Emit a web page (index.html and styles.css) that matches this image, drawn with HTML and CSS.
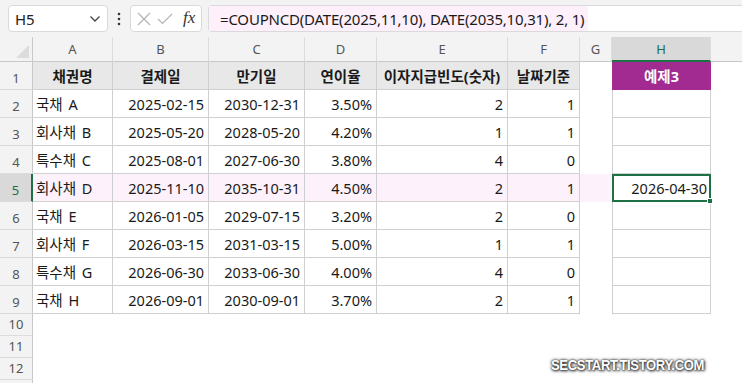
FILE: index.html
```html
<!DOCTYPE html>
<html lang="ko">
<head>
    <meta charset="UTF-8">
    <meta name="viewport" content="width=device-width, initial-scale=1.0">
    <title>COUPNCD 예제</title>
    <link rel="stylesheet" href="styles.css">
</head>
<body>
    <div class="app">
        <!-- formula bar -->
        <div class="toolbar">
            <div class="namebox">
                <span>H5</span>
                <svg width="12" height="8" viewBox="0 0 12 8"><path d="M1.5 1.5l4.5 4.5 4.5-4.5" fill="none" stroke="#444" stroke-width="1.3"/></svg>
            </div>
            <div class="dots">
                <svg width="4" height="14" viewBox="0 0 4 14"><circle cx="2" cy="2" r="1.3" fill="#333"/><circle cx="2" cy="7" r="1.3" fill="#333"/><circle cx="2" cy="12" r="1.3" fill="#333"/></svg>
            </div>
            <div class="fxbox">
                <svg width="14" height="14" viewBox="0 0 14 14"><path d="M1 1l12 12M13 1L1 13" stroke="#b4b4b4" stroke-width="1.2"/></svg>
                <svg width="16" height="12" viewBox="0 0 16 12"><path d="M1 6l4.5 4.5L15 1" fill="none" stroke="#b4b4b4" stroke-width="1.2"/></svg>
                <span class="fx">fx</span>
            </div>
            <div class="formula">
                <span class="formula-text">=COUPNCD(DATE(2025,11,10), DATE(2035,10,31), 2, 1)</span>
            </div>
        </div>

        <!-- worksheet -->
        <div class="sheet">
            <div class="corner"><span class="tri"></span></div>
            <div class="ch">A</div>
            <div class="ch">B</div>
            <div class="ch">C</div>
            <div class="ch">D</div>
            <div class="ch">E</div>
            <div class="ch">F</div>
            <div class="ch">G</div>
            <div class="ch sel">H</div>
            <div class="ch rest"></div>

            <div class="rh">1</div>
            <div class="c t hd">채권명</div>
            <div class="c t hd">결제일</div>
            <div class="c t hd">만기일</div>
            <div class="c t hd">연이율</div>
            <div class="c t hd">이자지급빈도(숫자)</div>
            <div class="c t hd">날짜기준</div>
            <div class="c"></div>
            <div class="c t hl purple">예제3</div>
            <div class="c"></div>

            <div class="rh">2</div>
            <div class="c t txt">국채 A</div>
            <div class="c t num">2025-02-15</div>
            <div class="c t num">2030-12-31</div>
            <div class="c t num">3.50%</div>
            <div class="c t num">2</div>
            <div class="c t num">1</div>
            <div class="c"></div>
            <div class="c t hl"></div>
            <div class="c"></div>

            <div class="rh">3</div>
            <div class="c t txt">회사채 B</div>
            <div class="c t num">2025-05-20</div>
            <div class="c t num">2028-05-20</div>
            <div class="c t num">4.20%</div>
            <div class="c t num">1</div>
            <div class="c t num">1</div>
            <div class="c"></div>
            <div class="c t hl"></div>
            <div class="c"></div>

            <div class="rh">4</div>
            <div class="c t txt">특수채 C</div>
            <div class="c t num">2025-08-01</div>
            <div class="c t num">2027-06-30</div>
            <div class="c t num">3.80%</div>
            <div class="c t num">4</div>
            <div class="c t num">0</div>
            <div class="c"></div>
            <div class="c t hl"></div>
            <div class="c"></div>

            <div class="rh sel">5</div>
            <div class="c t txt pink">회사채 D</div>
            <div class="c t num pink">2025-11-10</div>
            <div class="c t num pink">2035-10-31</div>
            <div class="c t num pink">4.50%</div>
            <div class="c t num pink">2</div>
            <div class="c t num pink">1</div>
            <div class="c pink"></div>
            <div class="c t hl num active">2026-04-30<span class="handle"></span></div>
            <div class="c"></div>

            <div class="rh">6</div>
            <div class="c t txt">국채 E</div>
            <div class="c t num">2026-01-05</div>
            <div class="c t num">2029-07-15</div>
            <div class="c t num">3.20%</div>
            <div class="c t num">2</div>
            <div class="c t num">0</div>
            <div class="c"></div>
            <div class="c t hl"></div>
            <div class="c"></div>

            <div class="rh">7</div>
            <div class="c t txt">회사채 F</div>
            <div class="c t num">2026-03-15</div>
            <div class="c t num">2031-03-15</div>
            <div class="c t num">5.00%</div>
            <div class="c t num">1</div>
            <div class="c t num">1</div>
            <div class="c"></div>
            <div class="c t hl"></div>
            <div class="c"></div>

            <div class="rh">8</div>
            <div class="c t txt">특수채 G</div>
            <div class="c t num">2026-06-30</div>
            <div class="c t num">2033-06-30</div>
            <div class="c t num">4.00%</div>
            <div class="c t num">4</div>
            <div class="c t num">0</div>
            <div class="c"></div>
            <div class="c t hl"></div>
            <div class="c"></div>

            <div class="rh">9</div>
            <div class="c t txt">국채 H</div>
            <div class="c t num">2026-09-01</div>
            <div class="c t num">2030-09-01</div>
            <div class="c t num">3.70%</div>
            <div class="c t num">2</div>
            <div class="c t num">1</div>
            <div class="c"></div>
            <div class="c t hl"></div>
            <div class="c"></div>

            <div class="rh">10</div>
            <div class="blank"></div>
            <div class="rh">11</div>
            <div class="blank"></div>
            <div class="rh">12</div>
            <div class="blank"></div>
            <div class="rh last"></div>
            <div class="blank"></div>
        </div>

        <div class="watermark">SECSTART.TISTORY.COM</div>
    </div>
</body>
</html>
```

FILE: styles.css
```css
*{
   margin: 0;
   padding: 0;
   box-sizing: border-box;
}
body{
   font-family: "Noto Sans", "Noto Sans CJK KR", sans-serif;
   background-color: #fff;
   color: #1a1a1a;
}
.app{
   position: relative;
   width: 742px;
   height: 383px;
   overflow: hidden;
}

/* formula bar */
.toolbar{
   height: 37px;
   background-color: #f3f3f3;
   display: flex;
   align-items: flex-start;
   padding: 5px 0 0 8px;
}
.namebox{
   width: 100px;
   height: 27px;
   background-color: #fff;
   border: 1px solid #dadada;
   border-radius: 4px;
   display: flex;
   align-items: center;
   justify-content: space-between;
   padding: 0 6px 0 6px;
   font-size: 15px;
   color: #222;
}
.dots{
   width: 22px;
   height: 27px;
   display: flex;
   align-items: center;
   justify-content: center;
}
.fxbox{
   width: 72px;
   height: 27px;
   background-color: #fff;
   border: 1px solid #dadada;
   border-radius: 4px;
   display: flex;
   align-items: center;
   gap: 6px;
   padding-left: 6px;
}
.fx{
   font-family: "Liberation Serif", serif;
   font-style: italic;
   font-size: 17px;
   color: #333;
   margin-left: 4px;
   margin-top: -2px;
}
.formula{
   flex: 1;
   height: 27px;
   margin-left: 6px;
   background-color: #fff;
   border: 1px solid #dadada;
   border-right: none;
   border-radius: 4px 0 0 4px;
   display: flex;
}
.formula-text{
   background-color: #fdf0fb;
   height: 100%;
   display: flex;
   align-items: center;
   padding: 0 4px 0 11px;
   font-size: 15px;
   color: #1a1a1a;
   letter-spacing: -0.2px;
}

/* worksheet grid */
.sheet{
   display: grid;
   grid-template-columns: 33px 80px 96px 96px 72px 131px 72px 32px 99px 1fr;
   grid-template-rows: 25px repeat(9, 28px) repeat(3, 22px) 1fr;
   height: 346px;
}
.corner{
   background-color: #f3f3f3;
   border-right: 1px solid #c8c8c8;
   border-bottom: 1px solid #c8c8c8;
   position: relative;
}
.tri{
   position: absolute;
   right: 3px;
   bottom: 3px;
   width: 0;
   height: 0;
   border-left: 13px solid transparent;
   border-bottom: 13px solid #dcdcdc;
}
.ch{
   background-color: #f3f3f3;
   border-right: 1px solid #dcdcdc;
   border-bottom: 1px solid #c8c8c8;
   display: flex;
   align-items: center;
   justify-content: center;
   font-size: 13px;
   color: #555;
}
.ch.rest{
   border-right: none;
}
.ch.sel{
   background-color: #d9d9d9;
   color: #1e6e42;
   border-bottom: 2px solid #1e7145;
}
.rh{
   grid-column: 1;
   background-color: #f3f3f3;
   border-right: 1px solid #c8c8c8;
   border-bottom: 1px solid #dcdcdc;
   display: flex;
   align-items: flex-end;
   justify-content: center;
   padding-bottom: 2px;
   font-size: 13px;
   color: #555;
}
.rh.sel{
   background-color: #d9d9d9;
   color: #1e6e42;
   border-right: 2px solid #1e7145;
}
.rh.last{
   border-bottom: none;
}
.blank{
   grid-column: 2 / -1;
}
.c{
   font-size: 14.5px;
   display: flex;
   align-items: center;
   white-space: nowrap;
   overflow: hidden;
}
.t{
   border-right: 1px solid #d0d0d0;
   border-bottom: 1px solid #d0d0d0;
}
.hl{
   border-left: 1px solid #d0d0d0;
}
.hd{
   background-color: #e8e8e8;
   font-weight: bold;
   justify-content: center;
}
.txt{
   padding-left: 3px;
   word-spacing: 2px;
}
.num{
   justify-content: flex-end;
   padding-right: 4px;
}
.pink{
   background-color: #fdf1fc;
}
.purple{
   background-color: #a12b91;
   color: #fff;
   font-weight: bold;
   justify-content: center;
   border-color: #a12b91;
}
.active{
   position: relative;
   border: 2px solid #1e7145;
   overflow: visible;
   padding-right: 2px;
}
.handle{
   position: absolute;
   right: -4px;
   bottom: -4px;
   width: 6px;
   height: 6px;
   background-color: #1e7145;
   border: 1px solid #fff;
}

/* blog watermark */
.watermark{
   position: absolute;
   left: 551px;
   top: 356px;
   font-family: "Liberation Sans", sans-serif;
   font-weight: bold;
   font-size: 15px;
   color: #fff;
   letter-spacing: -0.4px;
   transform: scaleX(0.87);
   transform-origin: left center;
   text-shadow: 0 0 2px #222, 1px 1px 3px #333, 0 0 4px #555;
}
```
